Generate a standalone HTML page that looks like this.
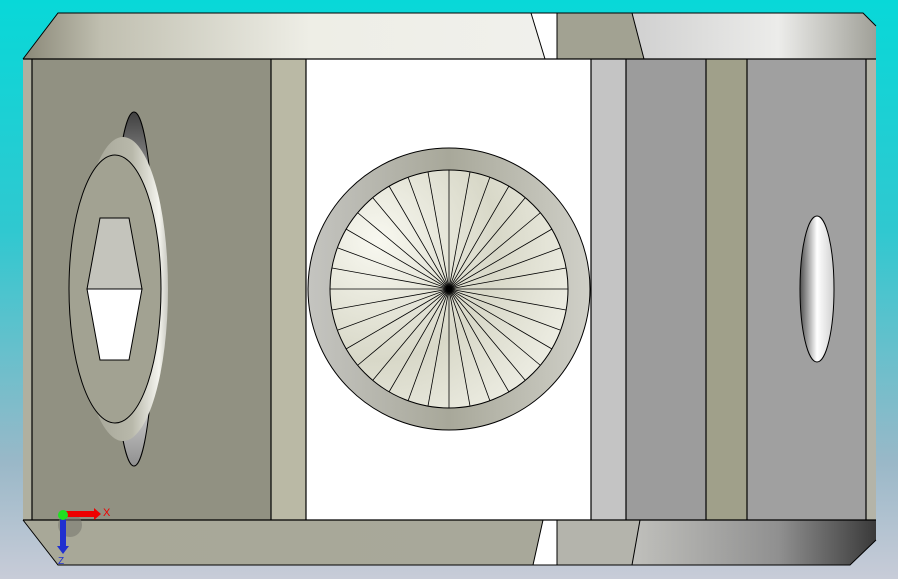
<html><head><style>body{margin:0;width:898px;height:579px;overflow:hidden;background:linear-gradient(180deg,#08d8d8 0%,#30c8d0 40%,#9ab8c8 80%,#c8ccd8 100%)}</style></head><body>
<svg width="898" height="579" viewBox="0 0 898 579" style="position:absolute;left:0;top:0">
<defs>
<linearGradient id="tb" x1="0" x2="1"><stop offset="0" stop-color="#8a8878"/><stop offset=".15" stop-color="#c0bfb0"/><stop offset=".55" stop-color="#eeeee6"/><stop offset="1" stop-color="#f0f0ec"/></linearGradient>
<linearGradient id="tr" x1="0" x2="1"><stop offset="0" stop-color="#d0d0d0"/><stop offset=".6" stop-color="#ececea"/><stop offset="1" stop-color="#a0a098"/></linearGradient>
<linearGradient id="bb" x1="0" x2="1"><stop offset="0" stop-color="#a8a898"/><stop offset="1" stop-color="#a8a89a"/></linearGradient>
<linearGradient id="br" x1="0" x2="1"><stop offset="0" stop-color="#c0c0bc"/><stop offset=".6" stop-color="#909090"/><stop offset="1" stop-color="#3a3a3a"/></linearGradient>
<linearGradient id="ring" x1="0" x2="1"><stop offset="0" stop-color="#c4c4c0"/><stop offset=".5" stop-color="#a8a89a"/><stop offset="1" stop-color="#d0d0c8"/></linearGradient>
<radialGradient id="fan" cx=".2" cy=".3" r="1"><stop offset="0" stop-color="#f8f8f0"/><stop offset=".5" stop-color="#d8d8c8"/><stop offset="1" stop-color="#f4f4ec"/></radialGradient>
<linearGradient id="slot" x1="0" x2="1"><stop offset="0" stop-color="#505050"/><stop offset=".5" stop-color="#ffffff"/><stop offset="1" stop-color="#d0d0d0"/></linearGradient>
<linearGradient id="bulge" x1="0" x2="1"><stop offset="0" stop-color="#a0a092"/><stop offset=".6" stop-color="#b8b8aa"/><stop offset=".9" stop-color="#f4f4ee"/><stop offset="1" stop-color="#c8c8c0"/></linearGradient>
<linearGradient id="hole" x1="0" x2="0" y1="0" y2="1"><stop offset="0" stop-color="#404040"/><stop offset=".2" stop-color="#a0a0a0"/><stop offset=".8" stop-color="#d8d8d8"/><stop offset="1" stop-color="#909090"/></linearGradient>
</defs>
<polygon points="58,13 531,13 545,59 23,59" fill="url(#tb)"/>
<polygon points="531,13 557,13 557,59 545,59" fill="#ffffff"/>
<polygon points="557,13 632,13 644,59 557,59" fill="#a2a292"/>
<polygon points="632,13 863,13 876,26 876,59 644,59" fill="url(#tr)"/>
<polyline points="23,59 58,13 863,13 876,26" fill="none" stroke="#000"/>
<line x1="531" y1="13" x2="545" y2="59" stroke="#000"/><line x1="557" y1="13" x2="557" y2="59" stroke="#000"/><line x1="632" y1="13" x2="644" y2="59" stroke="#000"/>
<polygon points="23,520 543,520 533,565 58,565" fill="url(#bb)"/>
<polygon points="543,520 557,520 557,565 533,565" fill="#ffffff"/>
<polygon points="557,520 640,520 632,565 557,565" fill="#b4b4ac"/>
<polygon points="640,520 876,520 876,540 850,565 632,565" fill="url(#br)"/>
<polyline points="23,520 58,565 850,565 876,540" fill="none" stroke="#000"/>
<line x1="543" y1="520" x2="533" y2="565" stroke="#000"/><line x1="557" y1="520" x2="557" y2="565" stroke="#000"/><line x1="640" y1="520" x2="632" y2="565" stroke="#000"/>
<rect x="23" y="59" width="9" height="461" fill="#b0b0a0"/>
<rect x="32" y="59" width="239" height="461" fill="#919182"/>
<rect x="271" y="59" width="35" height="461" fill="#bab9a5"/>
<rect x="306" y="59" width="285" height="461" fill="#fff"/>
<rect x="591" y="59" width="35" height="461" fill="#c4c4c4"/>
<rect x="626" y="59" width="80" height="461" fill="#9c9c9c"/>
<rect x="706" y="59" width="41" height="461" fill="#a0a08a"/>
<rect x="747" y="59" width="119" height="461" fill="#a0a0a0"/>
<rect x="866" y="59" width="10" height="461" fill="#b4b4a8"/>
<g stroke="#000" stroke-width="1.2">
<line x1="23" y1="59" x2="876" y2="59"/><line x1="23" y1="520" x2="876" y2="520"/>
<line x1="32" y1="59" x2="32" y2="520"/><line x1="271" y1="59" x2="271" y2="520"/><line x1="306" y1="59" x2="306" y2="520"/><line x1="591" y1="59" x2="591" y2="520"/><line x1="626" y1="59" x2="626" y2="520"/><line x1="706" y1="59" x2="706" y2="520"/><line x1="747" y1="59" x2="747" y2="520"/><line x1="866" y1="59" x2="866" y2="520"/>
</g>
<ellipse cx="134" cy="289" rx="21" ry="177" fill="url(#hole)" stroke="#000"/>
<ellipse cx="123" cy="289" rx="45" ry="152" fill="url(#bulge)"/>
<ellipse cx="115" cy="289" rx="46" ry="134" fill="#a2a292" stroke="#000"/>
<polygon points="100,218 129,218 142,289 87,289" fill="#c4c4bc" stroke="#000"/>
<polygon points="87,289 142,289 129,360 100,360" fill="#fff" stroke="#000"/>
<circle cx="449" cy="289" r="141" fill="url(#ring)" stroke="#000"/>
<circle cx="449" cy="289" r="119" fill="url(#fan)" stroke="#000"/>
<g stroke="#000" stroke-width=".8">
<line x1="330" y1="289" x2="568" y2="289"/><line x1="449" y1="170" x2="449" y2="408"/>
<line x1="332" y1="268" x2="566" y2="310"/><line x1="338" y1="248" x2="560" y2="330"/><line x1="346" y1="229" x2="552" y2="349"/><line x1="358" y1="213" x2="540" y2="365"/><line x1="373" y1="198" x2="525" y2="380"/><line x1="389" y1="186" x2="509" y2="392"/><line x1="408" y1="177" x2="490" y2="401"/><line x1="428" y1="172" x2="470" y2="406"/>
<line x1="470" y1="172" x2="428" y2="406"/><line x1="490" y1="177" x2="408" y2="401"/><line x1="509" y1="186" x2="389" y2="392"/><line x1="525" y1="198" x2="373" y2="380"/><line x1="540" y1="213" x2="358" y2="365"/><line x1="552" y1="229" x2="346" y2="349"/><line x1="560" y1="248" x2="338" y2="330"/><line x1="566" y1="268" x2="332" y2="310"/>
</g>
<circle cx="449" cy="289" r="3" fill="#000"/>
<ellipse cx="817" cy="289" rx="17" ry="73" fill="url(#slot)" stroke="#000"/>
<circle cx="70" cy="525" r="12" fill="#7a7a70" opacity=".6"/>
<rect x="64" y="511" width="30" height="6" fill="#e00"/><polygon points="94,508 101,514 94,520" fill="#e00"/>
<text x="103" y="516" font-family="Liberation Sans,sans-serif" font-size="11" fill="#e00">X</text>
<rect x="60" y="517" width="6" height="30" fill="#2030d0"/><polygon points="57,546 69,546 63,554" fill="#2030d0"/>
<text x="58" y="564" font-family="Liberation Sans,sans-serif" font-size="10" fill="#2030d0">Z</text>
<circle cx="63" cy="515" r="5" fill="#20e020"/>
</svg>
</body></html>
